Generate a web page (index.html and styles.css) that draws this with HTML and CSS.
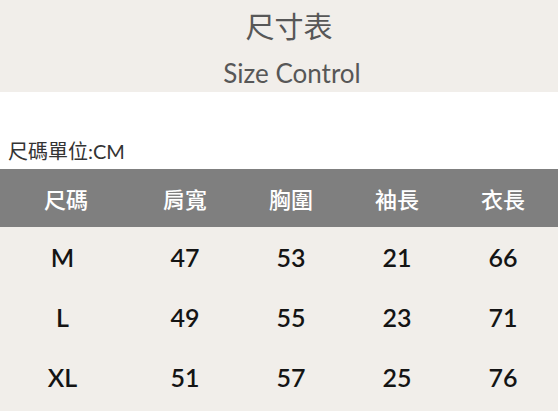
FILE: index.html
```html
<!DOCTYPE html>
<html lang="zh-Hant">
<head>
<meta charset="utf-8">
<title>尺寸表</title>
<link rel="stylesheet" href="styles.css">
</head>
<body>
<div class="page">
  <header class="top">
    <h1 class="title">尺寸表</h1>
    <p class="subtitle">Size Control</p>
  </header>
  <div class="unit-band">
    <p class="unit">尺碼單位:CM</p>
  </div>
  <div class="table">
    <div class="row head">
      <div class="cell first">尺碼</div>
      <div class="cell">肩寬</div>
      <div class="cell">胸圍</div>
      <div class="cell">袖長</div>
      <div class="cell">衣長</div>
    </div>
    <div class="row data">
      <div class="cell first">M</div>
      <div class="cell">47</div>
      <div class="cell">53</div>
      <div class="cell">21</div>
      <div class="cell">66</div>
    </div>
    <div class="row data">
      <div class="cell first">L</div>
      <div class="cell">49</div>
      <div class="cell">55</div>
      <div class="cell">23</div>
      <div class="cell">71</div>
    </div>
    <div class="row data">
      <div class="cell first">XL</div>
      <div class="cell">51</div>
      <div class="cell">57</div>
      <div class="cell">25</div>
      <div class="cell">76</div>
    </div>
  </div>
</div>
</body>
</html>
```

FILE: styles.css
```css
html, body {
  margin: 0;
  padding: 0;
  background: #f1eeea;
}
body {
  width: 558px;
  height: 411px;
  overflow: hidden;
  font-family: Lato, "Noto Sans CJK TC", sans-serif;
}
.page {
  display: flex;
  flex-direction: column;
}
.top {
  height: 92px;
  background: #f1eeea;
  display: flex;
  flex-direction: column;
  align-items: center;
  color: #575757;
}
.title {
  margin: 5px 0 0 20px;
  font-family: "Noto Sans CJK TC", sans-serif;
  font-weight: 400;
  font-size: 29px;
  line-height: 40px;
}
.subtitle {
  margin: 13px 0 0 26px;
  font-size: 26px;
  line-height: 30px;
  font-weight: 400;
}
.unit-band {
  height: 77px;
  background: #ffffff;
  display: flex;
  align-items: flex-end;
}
.unit {
  margin: 0 0 5px 8px;
  font-size: 20px;
  line-height: 26px;
  color: #333333;
}
.table {
  display: flex;
  flex-direction: column;
}
.row {
  display: grid;
  grid-template-columns: 132px repeat(4, 106px);
  align-items: center;
}
.cell {
  text-align: center;
}
.head {
  height: 58px;
  background: #7f7f7f;
  color: #ffffff;
  font-family: "Noto Sans CJK TC", sans-serif;
  font-size: 22px;
  font-weight: 500;
}
.data {
  height: 60px;
  color: #141414;
  font-size: 25px;
  font-weight: 600;
}
.data .first {
  padding-right: 7px;
}
```
